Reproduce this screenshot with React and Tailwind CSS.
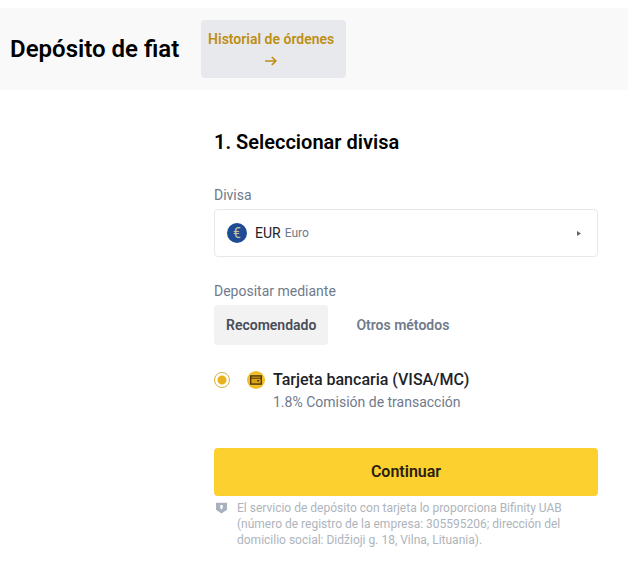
import { useState } from 'react'

const currencies = [
  { code: 'EUR', name: 'Euro', symbol: '€' },
  { code: 'GBP', name: 'Pound Sterling', symbol: '£' },
  { code: 'USD', name: 'US Dollar', symbol: '$' },
]

const tabs = ['Recomendado', 'Otros métodos']

function ArrowIcon() {
  return (
    <svg className="w-3 h-3" viewBox="0 0 12 12" fill="none" stroke="currentColor" strokeWidth="1.7" aria-hidden="true">
      <path d="M0 6h11M6.8 2l4 4-4 4" />
    </svg>
  )
}

function CardIcon() {
  return (
    <svg className="w-[18px] h-[18px] shrink-0" viewBox="0 0 18 18" aria-hidden="true">
      <circle cx="9" cy="9" r="9" fill="#eec02c" />
      <rect x="3.7" y="4.9" width="10.6" height="8.2" fill="#d9a514" stroke="#4b2f0c" strokeWidth="1.3" />
      <path d="M4 7.2h10" stroke="#4b2f0c" strokeWidth="1" />
      <rect x="10.2" y="9" width="2" height="1.4" fill="#4b2f0c" />
    </svg>
  )
}

function ShieldIcon() {
  return (
    <svg className="w-[11px] h-3 shrink-0" viewBox="0 0 11 12" aria-hidden="true">
      <path d="M0 0.8h11v7L5.5 11.6 0 7.8z" fill="#a9b1bf" />
      <path d="M4.3 3h2.4v2.8L5.5 7.8 4.3 5.8z" fill="#fff" />
    </svg>
  )
}

function CurrencySelect() {
  const [code, setCode] = useState('EUR')
  const current = currencies.find((c) => c.code === code)

  return (
    <div className="relative flex items-center h-12 px-3 border border-[#e6e8ea] rounded">
      <span className="flex items-center justify-center w-5 h-5 mr-2 rounded-full bg-[#1f4a94] text-[#c9c7a0] text-sm leading-none" aria-hidden="true">
        {current.symbol}
      </span>
      <span className="text-sm text-[#1e2329] mr-1">{current.code}</span>
      <span className="text-xs text-[#707a8a]">{current.name}</span>
      <svg className="w-1 h-[5px] ml-auto mr-1" viewBox="0 0 4 5" fill="#5f6671" aria-hidden="true">
        <path d="M0 0l4 2.5L0 5z" />
      </svg>
      <select
        id="currency"
        value={code}
        onChange={(e) => setCode(e.target.value)}
        className="absolute inset-0 w-full h-full opacity-0 cursor-pointer"
      >
        {currencies.map((c) => (
          <option key={c.code} value={c.code}>{c.code} {c.name}</option>
        ))}
      </select>
    </div>
  )
}

export default function App() {
  const [tab, setTab] = useState(tabs[0])

  return (
    <div className="min-h-screen bg-white pt-2 font-['Roboto',sans-serif]">
      <header className="flex items-center gap-[22px] bg-[#f9f9f9] px-[10px] py-3">
        <h1 className="text-2xl font-semibold text-black">Depósito de fiat</h1>
        <a href="#orders" className="flex flex-col items-center w-[145px] rounded bg-[#e8e9ed] pl-1 pr-[9px] pt-2 pb-[6px] text-sm leading-[22px] font-semibold text-[#bd8f14]">
          <span>Historial de órdenes</span>
          <span className="flex items-center h-[22px]"><ArrowIcon /></span>
        </a>
      </header>

      <main className="w-full max-w-96 ml-auto mr-[30px] pt-[38px]">
        <h2 className="text-xl leading-7 font-semibold text-black">1. Seleccionar divisa</h2>

        <label htmlFor="currency" className="block mt-[29px] mb-1 text-sm text-[#707a8a]">Divisa</label>
        <CurrencySelect />

        <p className="mt-6 mb-1 text-sm text-[#707a8a]">Depositar mediante</p>
        <div className="flex gap-4" role="tablist">
          {tabs.map((name) => (
            <button
              key={name}
              type="button"
              role="tab"
              aria-selected={tab === name}
              onClick={() => setTab(name)}
              className={`h-10 px-3 rounded text-sm font-semibold ${tab === name ? 'bg-[#f2f2f3] text-[#474d57]' : 'text-[#707a8a]'}`}
            >
              {name}
            </button>
          ))}
        </div>

        <label className="flex items-start mt-[23px]">
          <span className="flex items-center h-6">
            <input
              type="radio"
              name="method"
              defaultChecked
              className="appearance-none w-4 h-4 rounded-full border border-[#d9b13a] checked:bg-[radial-gradient(circle,#e6b31e_4px,transparent_5px)]"
            />
          </span>
          <span className="flex items-center h-6 ml-[17px] mr-2"><CardIcon /></span>
          <span>
            <span className="block text-base font-medium text-[#1e2329]">Tarjeta bancaria (VISA/MC)</span>
            <span className="block text-sm text-[#707a8a]">1.8% Comisión de transacción</span>
          </span>
        </label>

        <button type="button" className="w-full h-12 mt-9 rounded bg-[#fcd02f] text-base font-semibold text-[#2b2112]">
          Continuar
        </button>

        <div className="flex gap-[10px] mt-1 pl-[2px]">
          <span className="flex items-center h-4"><ShieldIcon /></span>
          <p className="text-xs leading-4 text-[#aeb4bc]">
            El servicio de depósito con tarjeta lo proporciona Bifinity UAB (número de registro de la empresa: 305595206; dirección del domicilio social: Didžioji g. 18, Vilna, Lituania).
          </p>
        </div>
      </main>
    </div>
  )
}
